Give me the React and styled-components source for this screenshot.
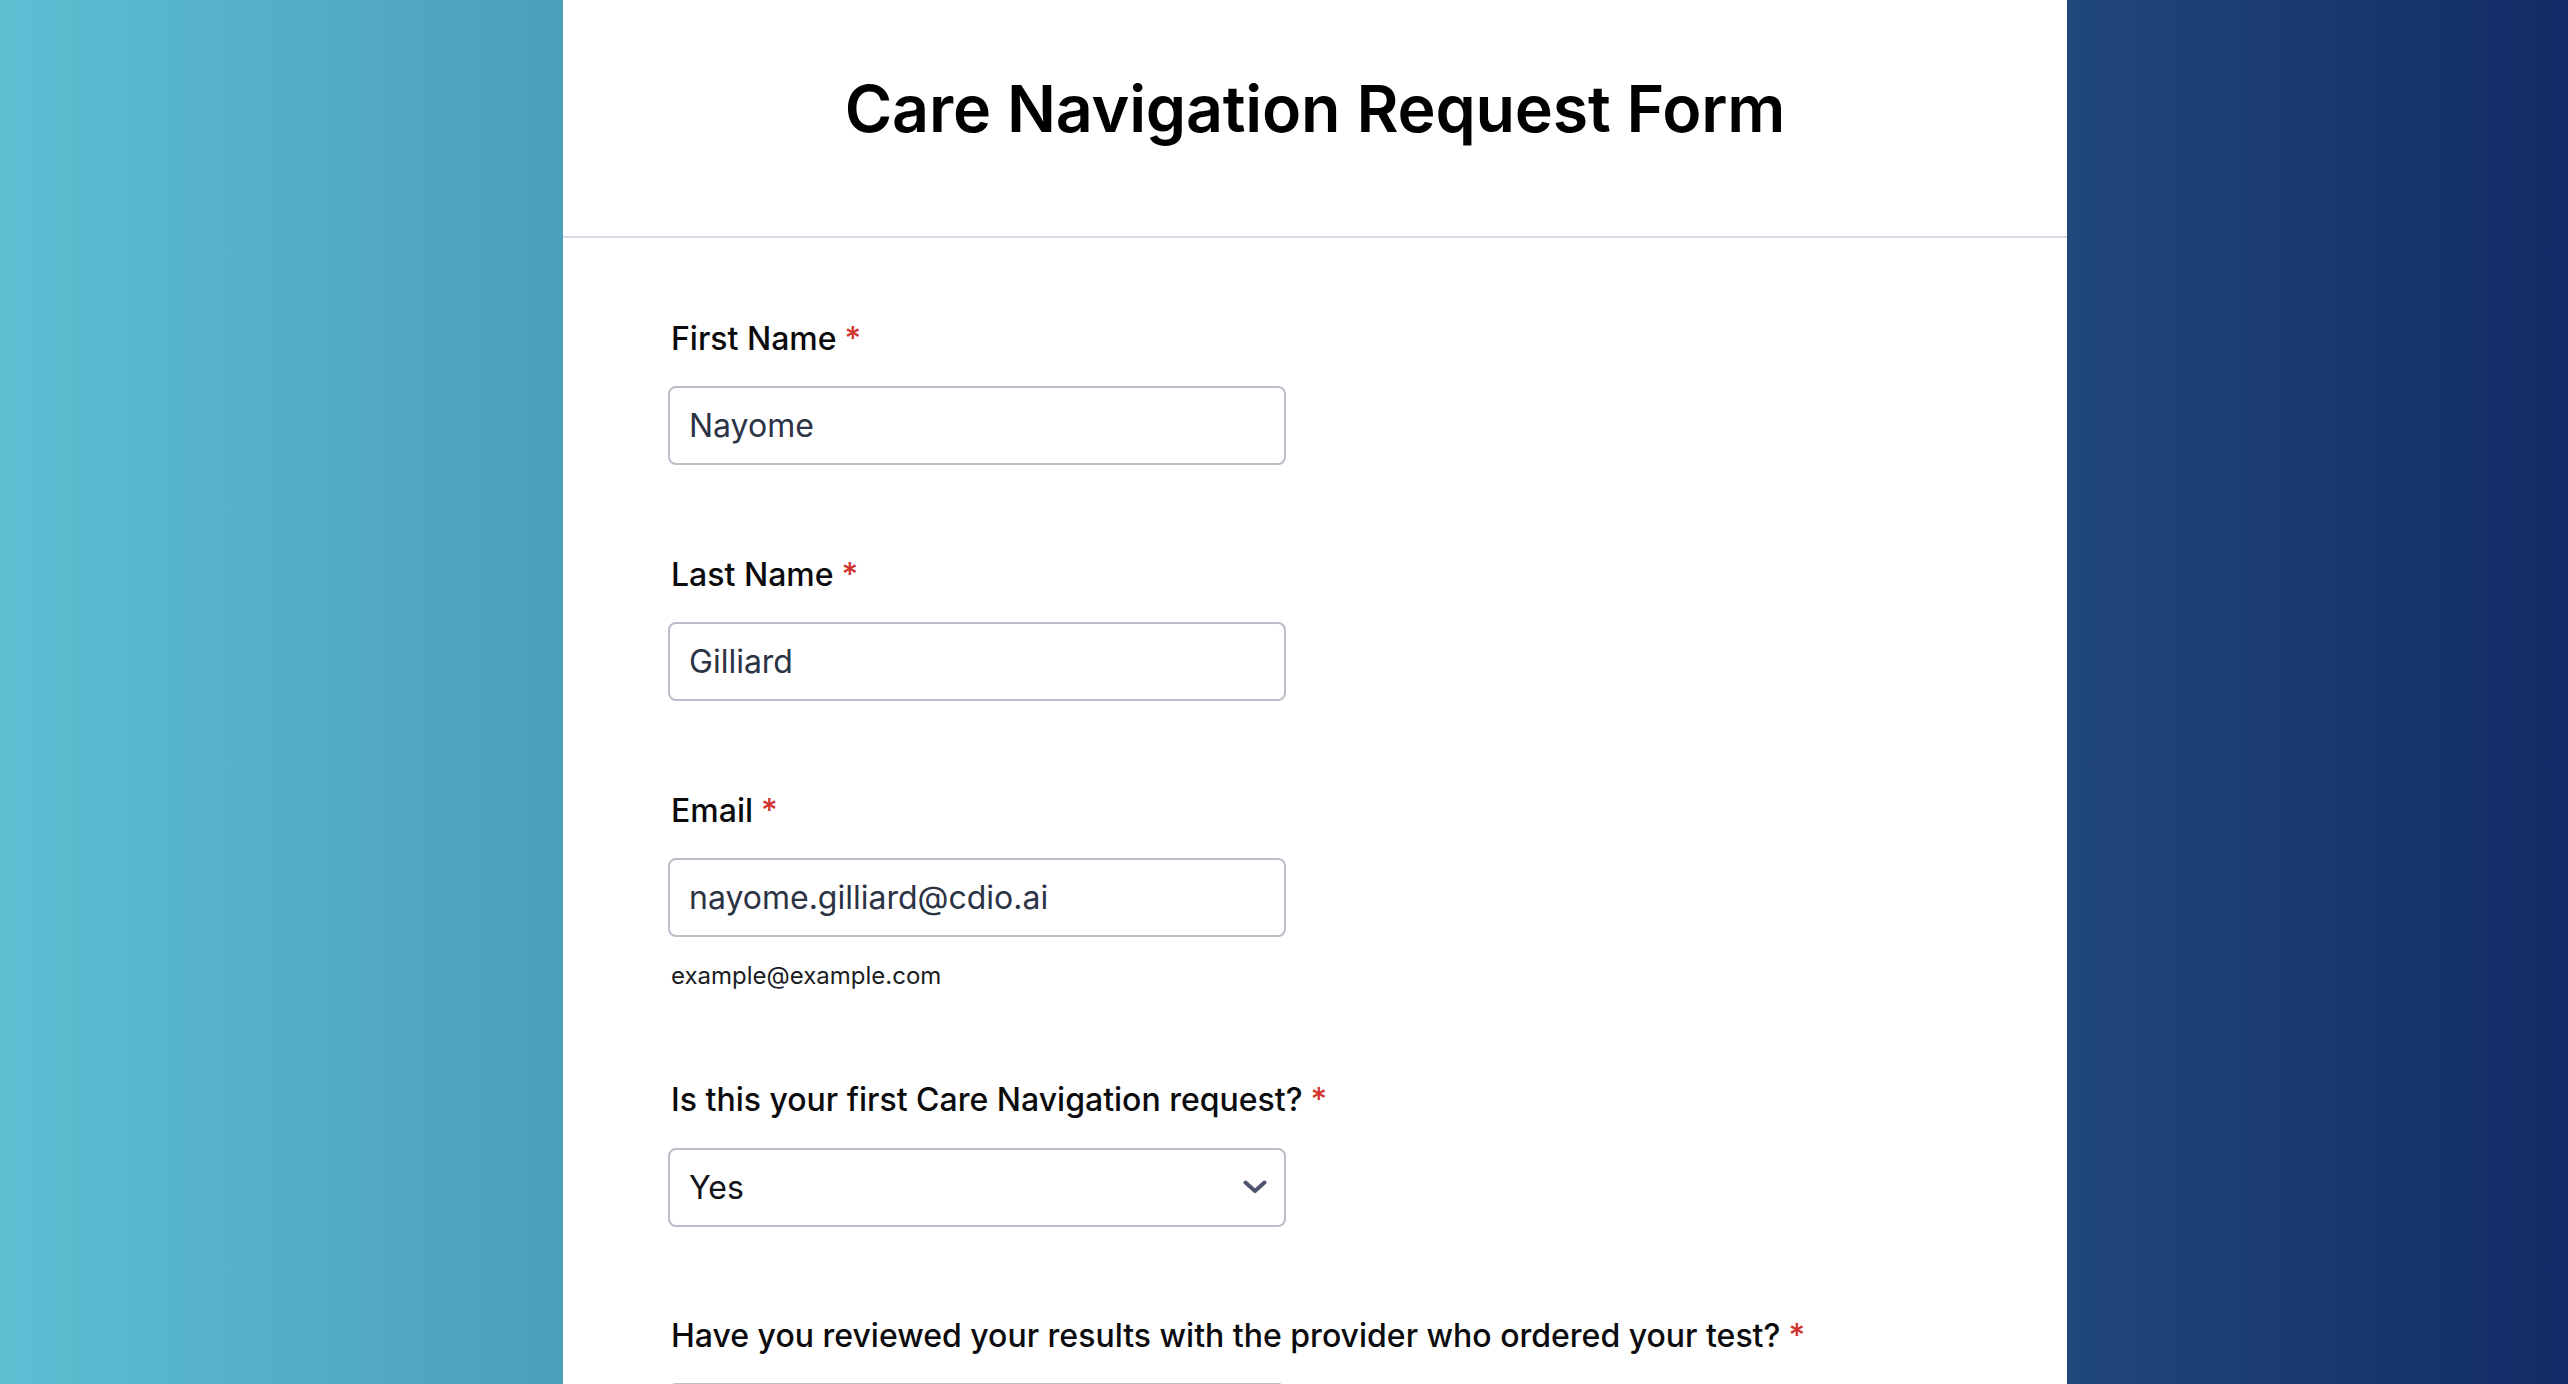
import styled, { createGlobalStyle } from 'styled-components';

const GlobalStyle = createGlobalStyle`
  html, body {
    margin: 0;
    padding: 0;
  }
  body {
    font-family: Inter, "Noto Sans", "Liberation Sans", sans-serif;
    background: linear-gradient(to right, #5cbfd2 0%, #122b66 100%);
  }
  * {
    box-sizing: border-box;
  }
`;

const Page = styled.div`
  height: 100vh;
  overflow: hidden;
  display: flex;
  justify-content: center;
  padding-left: 62px;
`;

const Card = styled.main`
  width: 1504px;
  flex-shrink: 0;
  background: #ffffff;
  display: flex;
  flex-direction: column;
`;

const Header = styled.header`
  padding: 70px 0 87px;
  border-bottom: 2px solid #d9dbe4;
  text-align: center;
`;

const Title = styled.h1`
  margin: 0;
  font-size: 64.5px;
  line-height: 79px;
  font-weight: 600;
  color: #000000;
  letter-spacing: -0.2px;
`;

const FormBody = styled.form`
  padding: 81px 105px 0;
  display: flex;
  flex-direction: column;
  gap: 89.5px;
`;

const Field = styled.div`
  display: flex;
  flex-direction: column;
`;

const Label = styled.label`
  padding: 1px 0 0 3px;
  font-size: 32px;
  line-height: 1.2;
  font-weight: 500;
  color: #0b0b0d;
  margin-bottom: 28px;
`;

const Required = styled.span`
  color: #d2342f;
  margin-left: 8px;
`;

const controlStyles = `
  width: 618px;
  height: 79px;
  border: 2px solid #b9bec9;
  border-radius: 8px;
  background: #ffffff;
  padding: 0 18px 0 19px;
  font-family: Inter, "Noto Sans", "Liberation Sans", sans-serif;
  font-size: 32px;
  outline: none;
`;

const TextInput = styled.input`
  ${controlStyles}
  color: #2c3345;
`;

const SubLabel = styled.span`
  margin-top: 25px;
  padding-left: 3px;
  font-size: 24px;
  line-height: 28.5px;
  color: #1b1d24;
`;

const SelectWrap = styled.div`
  position: relative;
  width: 618px;
`;

const Select = styled.select`
  ${controlStyles}
  appearance: none;
  -webkit-appearance: none;
  color: ${({ $placeholder }) => ($placeholder ? '#8c93a5' : '#111217')};
`;

const Chevron = styled.svg`
  position: absolute;
  right: 19px;
  top: 50%;
  width: 24px;
  height: 14px;
  transform: translateY(-50%);
  pointer-events: none;
`;

const SelectField = ({ value, options, placeholder }) => (
  <SelectWrap>
    <Select defaultValue={value} $placeholder={!value}>
      {placeholder && <option value="">{placeholder}</option>}
      {options.map((o) => (
        <option key={o} value={o}>
          {o}
        </option>
      ))}
    </Select>
    <Chevron viewBox="0 0 24 14" fill="none">
      <path
        d="M2.5 2.5 L12 11 L21.5 2.5"
        stroke="#4f5670"
        strokeWidth="4"
        strokeLinecap="round"
        strokeLinejoin="round"
      />
    </Chevron>
  </SelectWrap>
);

const FieldLabel = ({ children }) => (
  <Label>
    {children}
    <Required>*</Required>
  </Label>
);

export default function App() {
  return (
    <>
      <GlobalStyle />
      <Page>
        <Card>
          <Header>
            <Title>Care Navigation Request Form</Title>
          </Header>
          <FormBody onSubmit={(e) => e.preventDefault()}>
            <Field>
              <FieldLabel>First Name</FieldLabel>
              <TextInput type="text" defaultValue="Nayome" />
            </Field>
            <Field>
              <FieldLabel>Last Name</FieldLabel>
              <TextInput type="text" defaultValue="Gilliard" />
            </Field>
            <Field>
              <FieldLabel>Email</FieldLabel>
              <TextInput type="email" defaultValue="nayome.gilliard@cdio.ai" />
              <SubLabel>example@example.com</SubLabel>
            </Field>
            <Field>
              <FieldLabel>Is this your first Care Navigation request?</FieldLabel>
              <SelectField value="Yes" options={['Yes', 'No']} />
            </Field>
            <Field>
              <FieldLabel>
                Have you reviewed your results with the provider who ordered your test?
              </FieldLabel>
              <SelectField value="" placeholder="Please Select" options={['Yes', 'No']} />
            </Field>
          </FormBody>
        </Card>
      </Page>
    </>
  );
}
